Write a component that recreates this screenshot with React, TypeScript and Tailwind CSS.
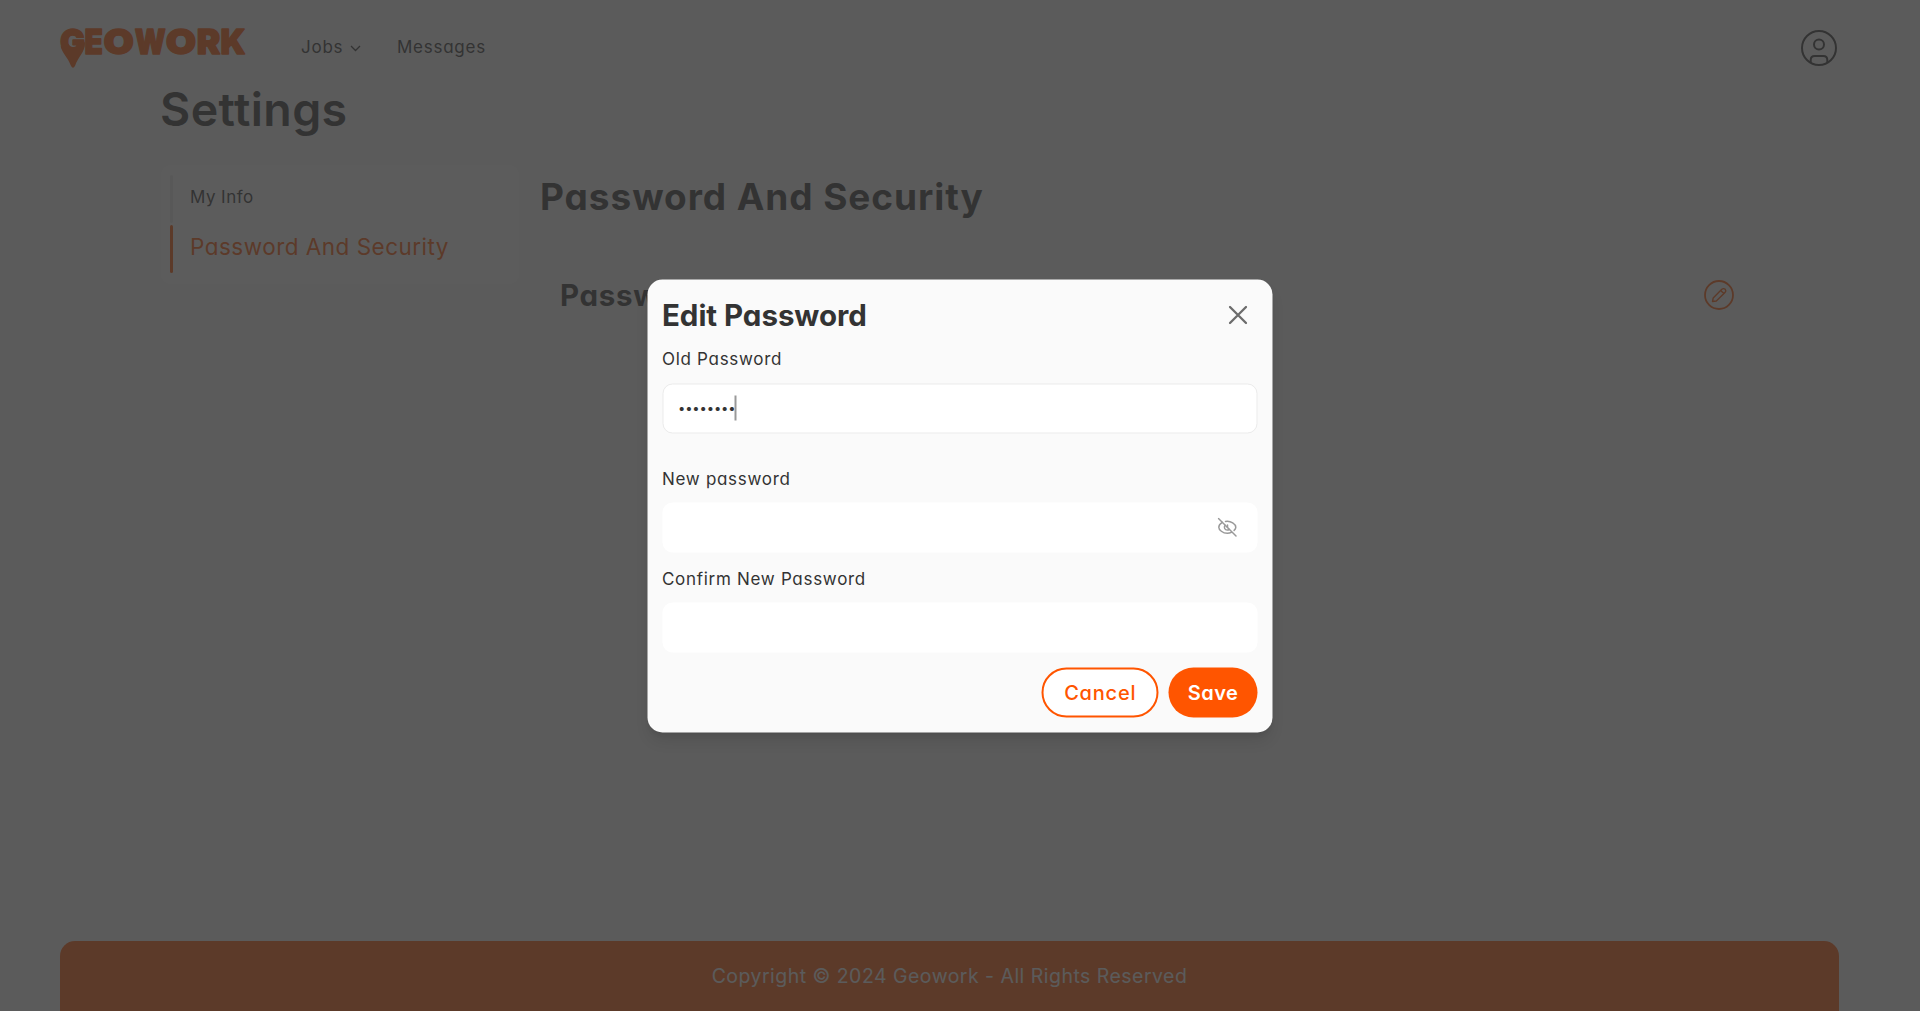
import React from "react";

const letters = [
  { c: "G", x: 0, w: 25 },
  { c: "E", x: 24.6, w: 18.4 },
  { c: "O", x: 43.6, w: 30.4 },
  { c: "W", x: 74.8, w: 31 },
  { c: "O", x: 105.8, w: 30.4 },
  { c: "R", x: 136.8, w: 23.6 },
  { c: "K", x: 160.6, w: 25 },
];

function Logo() {
  return (
    <svg className="h-12 w-[190px] shrink-0 overflow-visible" viewBox="0 0 190 48" fill="#ff5500" stroke="#ff5500">
      {letters.map((l, i) => (
        <text
          key={i}
          x={l.x}
          y={31.4}
          textLength={l.w}
          lengthAdjust="spacingAndGlyphs"
          fontFamily="Inter"
          fontWeight={900}
          fontSize={34.5}
          letterSpacing={0}
          strokeWidth={1.4}
          strokeLinejoin="round"
        >
          {l.c}
        </text>
      ))}
      <path
        stroke="none"
        d="M.7 23.5C2 30 8 34.500 10.800 42.500Q13 47 15.200 42.500C18 34 25 29 25 20.500Q24.500 17 21 17H13V21.500H17Q16.500 24 13 24Q10 24 8.500 21Z"
      />
    </svg>
  );
}

function UserIcon() {
  return (
    <svg className="size-9" viewBox="0 0 36 36" fill="none" stroke="#333" strokeWidth="2">
      <circle cx="18" cy="18" r="17" />
      <circle cx="18" cy="14.500" r="5" />
      <path d="M9.700 32.500V30Q9.700 26 13.700 26H22.300Q26.300 26 26.300 30V32.500" />
    </svg>
  );
}

function EditIcon() {
  return (
    <svg className="size-[30px]" viewBox="0 0 30 30" fill="none" stroke="#ff5500" strokeLinejoin="round">
      <circle cx="15" cy="15" r="14" strokeWidth="1.800" />
      <path
        strokeWidth="1.400"
        d="M8.500 21.500L9.200 18L17.800 9.300Q19.600 7.900 21.200 9.300Q22.500 11 21 12.500L12.300 21L8.500 21.500ZM16.700 10.500L19.800 13.600"
      />
    </svg>
  );
}

function EyeOffIcon() {
  return (
    <svg className="size-5" viewBox="0 0 20 20" fill="none" stroke="#999" strokeWidth="1.500" strokeLinecap="round">
      <path d="M1 1L18.500 18.500" />
      <path d="M4.800 4.900C2.700 6.200 1.300 8.200 1.300 9.700C1.300 12.400 5.200 15.800 9.800 15.800C11.300 15.800 12.700 15.500 13.900 14.900" />
      <path d="M8 3.900C13.500 2.900 18.300 6.900 18.300 9.700C18.300 10.900 17.600 12 16.600 12.900" />
      <path d="M7.600 7.800C6 9.800 7.300 12.700 9.900 12.600C10.700 12.600 11.300 12.300 11.800 11.900" />
      <path d="M10 7.600V10" />
    </svg>
  );
}

function Field({ filled, children }: { filled?: boolean; children?: React.ReactNode }) {
  return (
    <div
      className={
        filled
          ? "flex h-[50px] shrink-0 items-center rounded-[10px] border border-[#ebebeb] bg-white px-[15px]"
          : "flex h-[50px] shrink-0 items-center justify-end rounded-[10px] bg-white px-5"
      }
    >
      {children}
    </div>
  );
}

function EditPasswordDialog() {
  return (
    <div
      role="dialog"
      className="flex h-[453px] w-[625px] -translate-x-[0.5px] translate-y-[0.5px] flex-col rounded-[15px] bg-[#fafafa] p-[15px] text-[17px] tracking-[0.700px] shadow-lg"
    >
      <div className="flex h-[39.500px] shrink-0 items-center justify-between pt-px pr-[10px]">
        <h2 className="text-[29.500px] font-bold tracking-[-0.050px]">Edit Password</h2>
        <svg className="size-[19px]" viewBox="0 0 19 19" stroke="#6b6b6b" strokeWidth="2.300" strokeLinecap="round">
          <path d="M1.500 1.500L17.500 17.500M17.500 1.500L1.500 17.500" />
        </svg>
      </div>
      <div className="flex h-[49px] shrink-0 items-center pt-[2px]">Old Password</div>
      <Field filled>
        {Array.from({ length: 8 }, (_, i) => (
          <span key={i} className="flex w-[7.200px] justify-center text-[13px] leading-none tracking-normal">
            •
          </span>
        ))}
        <span className="-ml-px h-[25px] w-0.5 bg-[#999]" />
      </Field>
      <div className="mt-5 flex h-[49.500px] shrink-0 items-center pt-[3px]">New password</div>
      <Field>
        <EyeOffIcon />
      </Field>
      <div className="flex h-[50px] shrink-0 items-center pt-[3px]">Confirm New Password</div>
      <Field />
      <div className="mt-[15px] flex h-[50px] shrink-0 justify-end gap-2.5 text-[20px]">
        <button className="w-[116.500px] rounded-full border-2 border-[#ff5500] bg-white pl-px font-medium tracking-[0.800px] text-[#ff5500]">
          Cancel
        </button>
        <button className="w-[89px] rounded-full bg-[#ff5500] pl-px font-semibold tracking-[0.400px] text-white">Save</button>
      </div>
    </div>
  );
}

export default function App() {
  return (
    <div className="relative flex h-[1011px] w-full flex-col overflow-hidden bg-[#fafafa] font-['Inter',sans-serif] text-[#333] [font-feature-settings:'cv11']">
      <header className="flex h-[94px] shrink-0 items-center pl-[60px] text-[17px] tracking-[0.750px]">
        <Logo />
        <nav className="mt-0.5 ml-[51px] flex items-center">
          <span className="w-[43px]">Jobs</span>
          <svg className="mt-px ml-[6px] h-[7px] w-[11px]" viewBox="0 0 11 7" fill="none" stroke="#333" strokeWidth="1.300">
            <path d="M1 1L5.500 5.500L10 1" />
          </svg>
          <span className="ml-[36px]">Messages</span>
        </nav>
        <div className="mt-0.5 mr-[83px] ml-auto">
          <UserIcon />
        </div>
      </header>

      <main className="flex-1 px-[160px]">
        <h1 className="h-[30px] text-[46.500px] leading-[31px] font-semibold tracking-[0.400px]">Settings</h1>
        <div className="mt-[41px] flex">
          <aside className="ml-px flex h-[119px] w-[358px] flex-col gap-0.5 rounded-[10px] bg-white px-[9px] pt-[10px]">
            <div className="flex h-12 items-center">
              <span className="h-full w-[3px] rounded-full bg-[#ebebeb]" />
              <span className="-mt-[3px] ml-[17px] text-[17px] tracking-[0.450px]">My Info</span>
            </div>
            <div className="flex h-12 items-center text-[#ff5500]">
              <span className="h-full w-[3px] rounded-full bg-[#ff5500]" />
              <span className="-mt-[4px] ml-[17px] text-[22.500px] tracking-[0.480px]">Password And Security</span>
            </div>
          </aside>
          <section className="ml-[21px] flex-1">
            <h2 className="h-16 text-[37px] leading-[64px] font-bold tracking-[0.930px]">Password And Security</h2>
            <div className="mt-[51px] flex h-[30px] items-center justify-between pr-[26px] pl-5">
              <h3 className="text-[29.500px] font-bold tracking-[0.700px]">Password</h3>
              <EditIcon />
            </div>
          </section>
        </div>
      </main>

      <footer className="mr-[81px] ml-[60px] flex h-[70px] shrink-0 items-center justify-center rounded-t-[15px] bg-[#ff5500] pt-px text-[19.500px] tracking-[0.470px] text-[#fafafa]">
        Copyright © 2024 Geowork - All Rights Reserved
      </footer>

      <div className="absolute inset-0 flex items-center justify-center bg-[#333]/80">
        <EditPasswordDialog />
      </div>
    </div>
  );
}
